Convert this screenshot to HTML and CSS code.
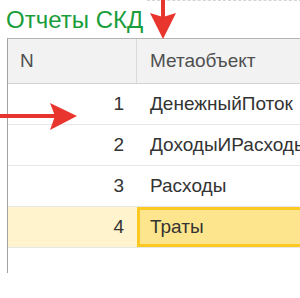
FILE: index.html
```html
<!DOCTYPE html>
<html lang="ru">
<head>
    <meta charset="UTF-8">
    <meta name="viewport" content="width=device-width, initial-scale=1.0">
    <title>Отчеты СКД</title>
    <link rel="stylesheet" href="styles.css">
</head>
<body>
<div class="page">
    <div class="top-dash"></div>

    <h1 class="title">Отчеты СКД</h1>

    <div class="grid">
        <div class="row head">
            <div class="cell num">N</div>
            <div class="cell">Метаобъект</div>
        </div>
        <div class="row">
            <div class="cell num">1</div>
            <div class="cell">ДенежныйПоток</div>
        </div>
        <div class="row">
            <div class="cell num">2</div>
            <div class="cell">ДоходыИРасходы</div>
        </div>
        <div class="row">
            <div class="cell num">3</div>
            <div class="cell">Расходы</div>
        </div>
        <div class="row current">
            <div class="cell num">4</div>
            <div class="cell active">Траты</div>
        </div>
    </div>

    <!-- annotation arrows -->
    <svg class="arrow arrow-down" width="30" height="40" viewBox="0 0 30 40">
        <rect x="12" y="0" width="4" height="20" fill="#e8352d"/>
        <polygon points="1,13 14,17 27,13 14,39" fill="#e8352d"/>
    </svg>
    <svg class="arrow arrow-right" width="80" height="32" viewBox="0 0 80 32">
        <rect x="0" y="12" width="56" height="4" fill="#e8352d"/>
        <polygon points="50,1 77,14 50,28 55,14" fill="#e8352d"/>
    </svg>
</div>
</body>
</html>
```

FILE: styles.css
```css
html, body {
    margin: 0;
    padding: 0;
    background: #fff;
    overflow: hidden;
}
.page {
    position: relative;
    width: 300px;
    height: 298px;
    overflow: hidden;
    font-family: "Liberation Sans", Arial, sans-serif;
}
.top-dash {
    position: absolute;
    left: 147px;
    top: 0;
    width: 160px;
    border-top: 1px dashed #d4d4d4;
}
.title {
    margin: 6px 0 0 6px;
    height: 28px;
    line-height: 28px;
    font-size: 24px;
    font-weight: normal;
    color: #1a9e3c;
    white-space: nowrap;
}
.grid {
    margin: 4px 0 0 7px;
    width: 420px;
    height: 235px;
    box-sizing: border-box;
    border-left: 1px solid #a2a2a2;
    border-top: 1px solid #b4b4b4;
}
.row {
    display: grid;
    grid-template-columns: 129px 1fr;
    height: 41px;
    box-sizing: border-box;
    border-bottom: 1px solid #e6e6e6;
    font-size: 19px;
    color: #333;
}
.row.head {
    height: 45px;
    background: #f2f2f2;
    border-bottom: 1px solid #d2d2d2;
    color: #4f4f4f;
}
.cell {
    display: flex;
    align-items: center;
    box-sizing: border-box;
    padding-left: 13px;
    white-space: nowrap;
}
.cell.num {
    justify-content: flex-end;
    padding-left: 0;
    padding-right: 13px;
}
.head .cell.num {
    justify-content: flex-start;
    padding-left: 12px;
    border-right: 1px solid #dadada;
}
.current .cell.num {
    background: #fef3cd;
}
.cell.active {
    background: #fde58d;
    border: 3px solid #fcc923;
    padding-left: 10px;
}
.arrow {
    position: absolute;
}
.arrow-down {
    left: 149px;
    top: 0;
}
.arrow-right {
    left: 0;
    top: 102px;
}
```
